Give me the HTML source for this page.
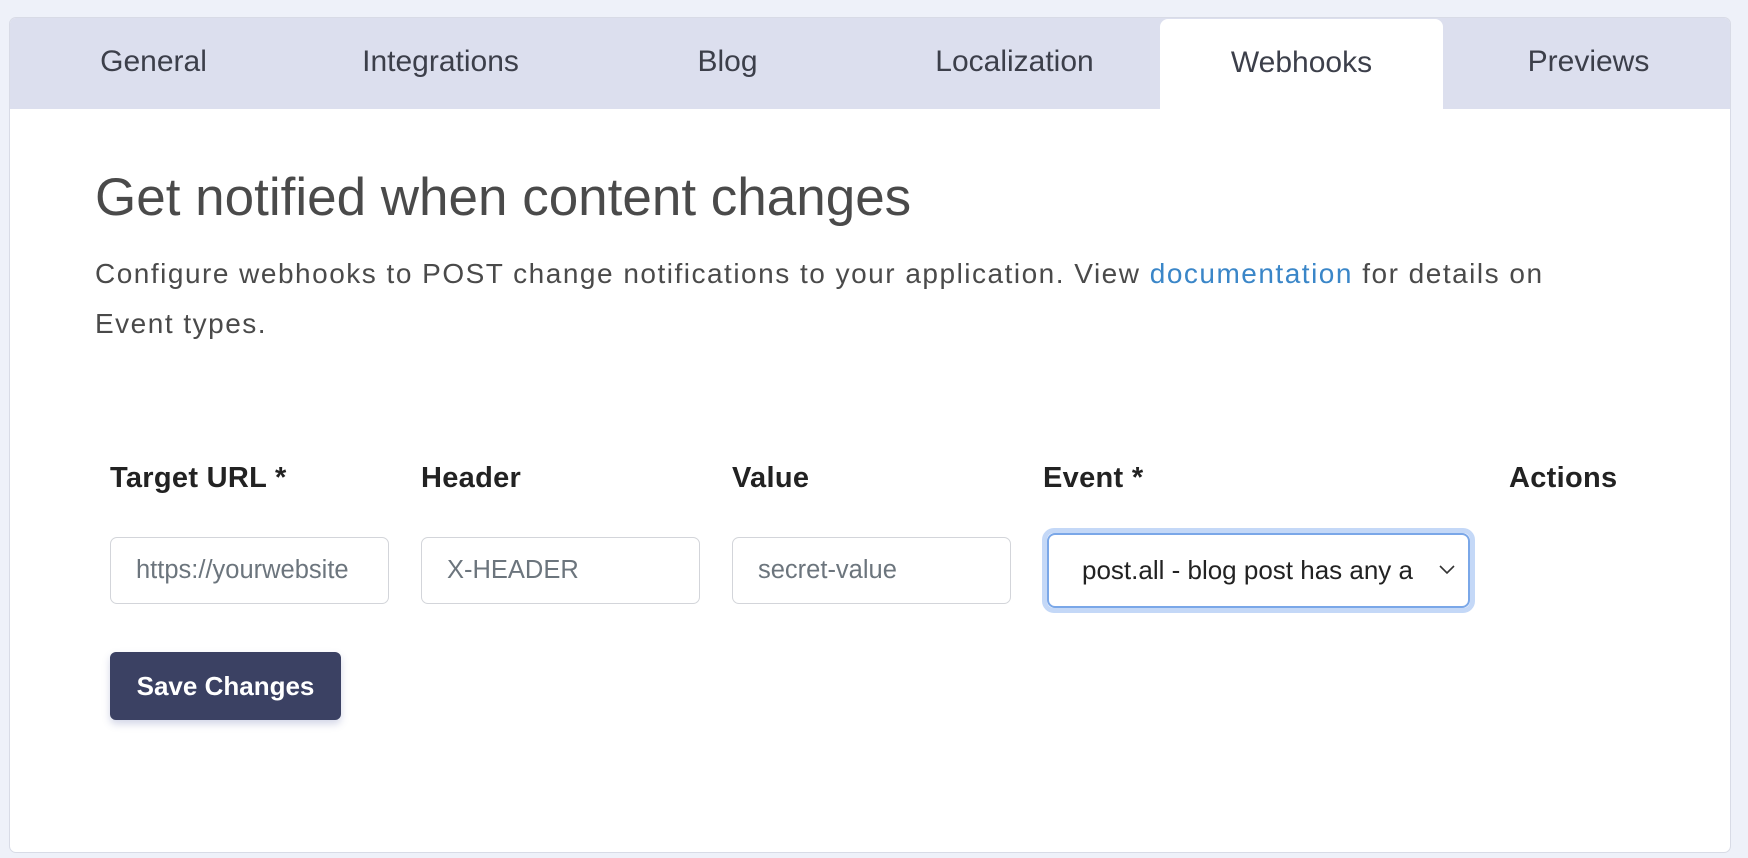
<!DOCTYPE html>
<html><head><meta charset="utf-8"><style>
*{box-sizing:border-box;margin:0;padding:0}
body{width:1748px;height:858px;background:#eef1f9;font-family:"Liberation Sans",sans-serif;position:relative;overflow:hidden}
.card{position:absolute;left:9px;top:17px;width:1722px;height:836px;background:#fff;border:1px solid #d8dbe6;border-radius:7px;overflow:hidden}
.tabs{position:absolute;left:0;top:0;width:100%;height:91px;background:#dcdfee}
.tab{position:absolute;top:0;height:91px;width:287px;text-align:center;line-height:88px;font-size:30px;color:#3c3f4a}
.tab.active{background:#fff;border-radius:8px 8px 0 0;top:1px;width:283px}
h1{position:absolute;left:85px;top:149px;font-size:53px;font-weight:normal;color:#4a4a4a;white-space:nowrap}
p{position:absolute;left:85px;top:231px;width:1600px;font-size:28px;letter-spacing:1.5px;line-height:50px;color:#4a4a4a}
p a{color:#3a86c8;text-decoration:none}
.lab{position:absolute;top:444px;font-size:29px;letter-spacing:0.3px;font-weight:bold;color:#222}
.inp{position:absolute;top:519px;height:67px;width:279px;border:1.5px solid #d3d5da;border-radius:7px;font-size:25.5px;color:#6c757d;line-height:64px;padding-left:25px;white-space:nowrap;overflow:hidden}
.sel{position:absolute;left:1032px;top:510px;width:433px;height:85px;border:5px solid #c4d8f7;border-radius:12px}
.sel div{position:absolute;left:0;top:0;right:0;bottom:0;border:2px solid #7aa7e8;border-radius:8px;font-size:26px;color:#222;line-height:70px;padding-left:33px;white-space:nowrap;overflow:hidden}
.btn{position:absolute;left:100px;top:634px;width:231px;height:68px;background:#3b4163;border-radius:6px;color:#fff;font-weight:bold;font-size:26px;text-align:center;line-height:68px;box-shadow:0 4px 8px rgba(80,90,160,.25)}
</style></head><body>
<div class="card">
 <div class="tabs">
  <div class="tab" style="left:0">General</div>
  <div class="tab" style="left:287px">Integrations</div>
  <div class="tab" style="left:574px">Blog</div>
  <div class="tab" style="left:861px">Localization</div>
  <div class="tab active" style="left:1150px">Webhooks</div>
  <div class="tab" style="left:1435px">Previews</div>
 </div>
 <h1>Get notified when content changes</h1>
 <p>Configure webhooks to POST change notifications to your application. View <a>documentation</a> for details on<br>Event types.</p>
 <div class="lab" style="left:100px">Target URL *</div>
 <div class="lab" style="left:411px">Header</div>
 <div class="lab" style="left:722px">Value</div>
 <div class="lab" style="left:1033px">Event *</div>
 <div class="lab" style="left:1499px">Actions</div>
 <div class="inp" style="left:100px">https://yourwebsite</div>
 <div class="inp" style="left:411px">X-HEADER</div>
 <div class="inp" style="left:722px">secret-value</div>
 <div class="sel"><div><span style="display:inline-block;width:338px;overflow:hidden;vertical-align:top">post.all - blog post has any a</span><svg style="position:absolute;right:12px;top:29px" width="18" height="12" viewBox="0 0 18 12"><path d="M2 2l7 7 7-7" fill="none" stroke="#333" stroke-width="1.6"/></svg></div></div>
 <div class="btn">Save Changes</div>
</div>
</body></html>
